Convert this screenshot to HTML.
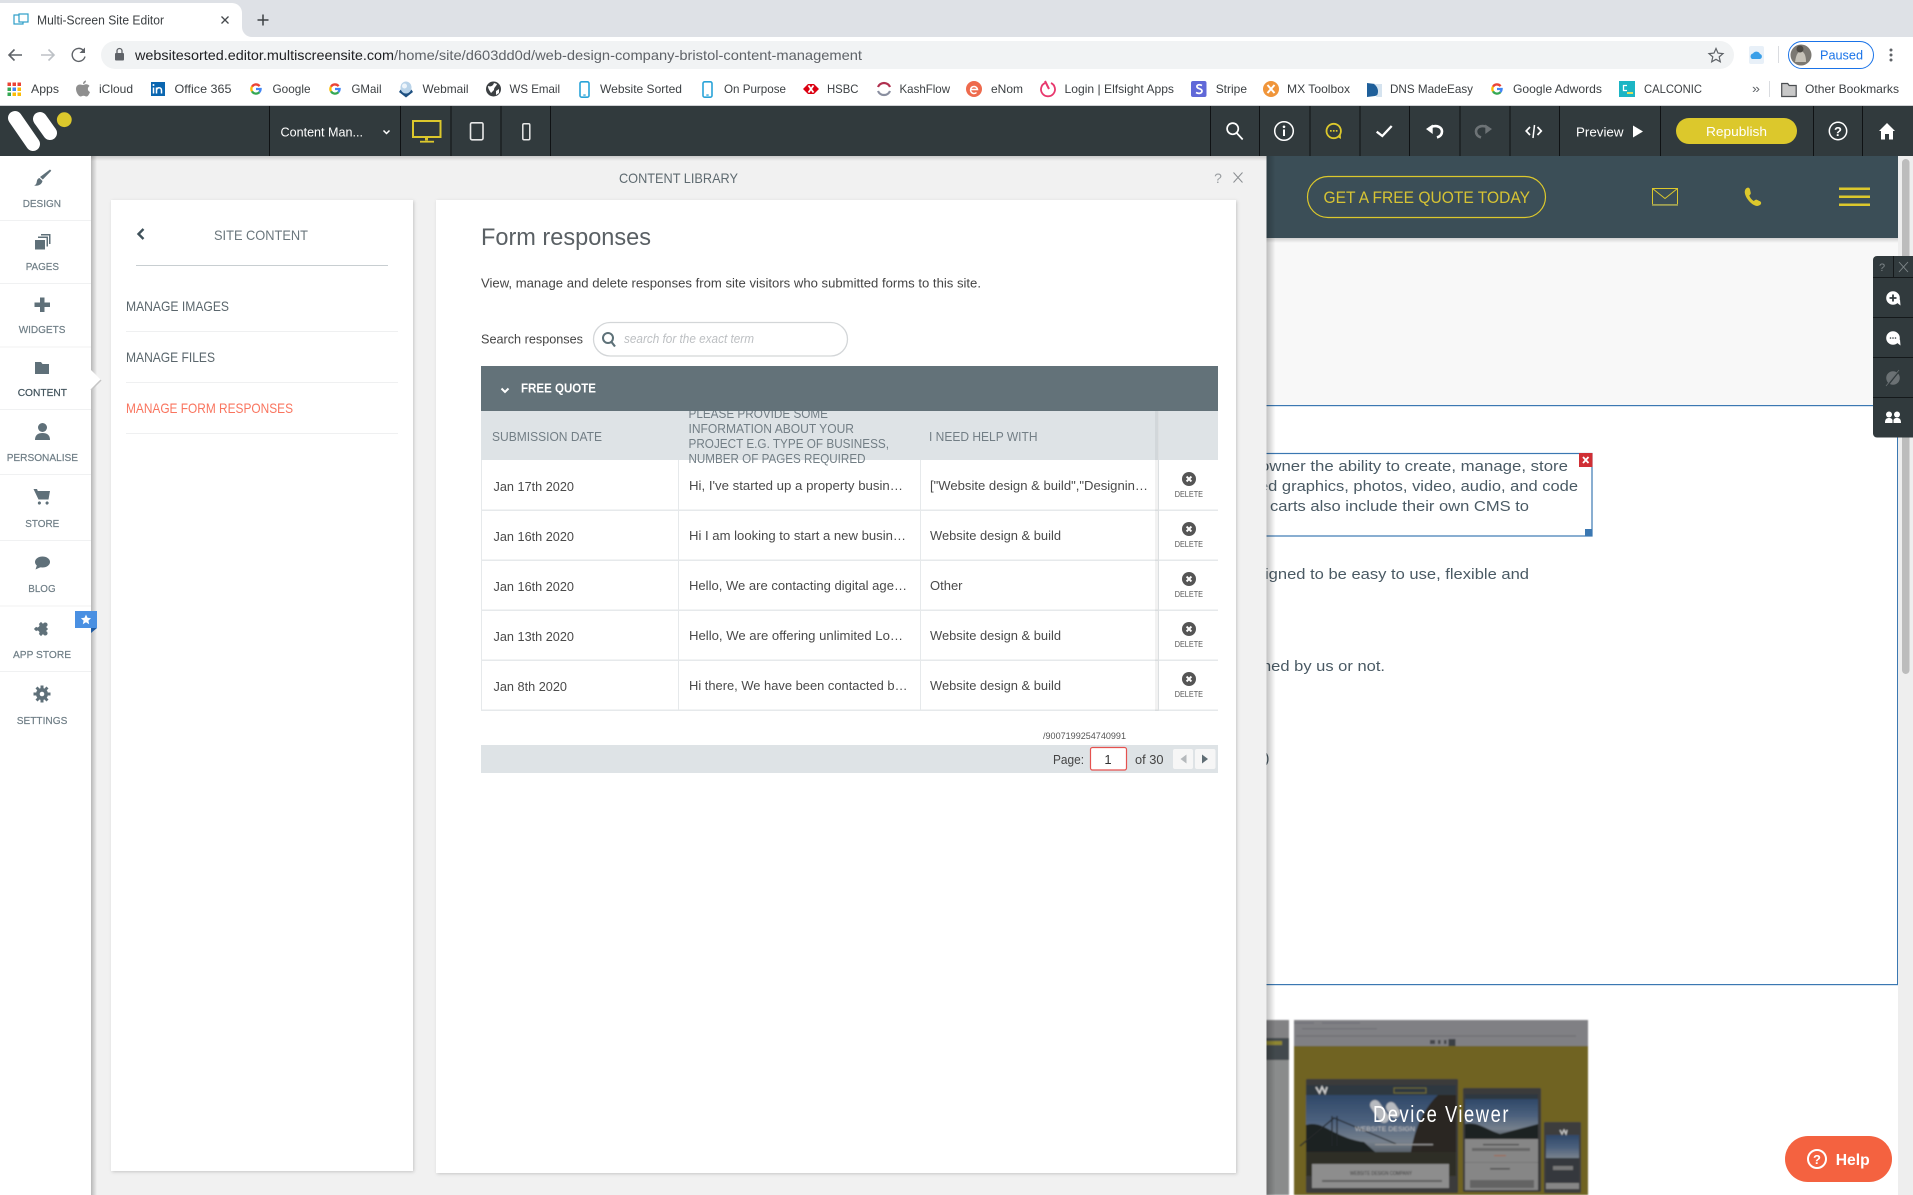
<!DOCTYPE html>
<html><head><meta charset="utf-8"><title>Multi-Screen Site Editor</title>
<style>
html,body{margin:0;padding:0;width:1913px;height:1195px;overflow:hidden;background:#fff}
svg{display:block;position:absolute;left:0;top:0}
text{font-family:"Liberation Sans",sans-serif;white-space:pre}
.bm{font-size:12px;fill:#3c4043}
.side{font-size:10.5px;fill:#6f7e86;stroke:#6f7e86;stroke-width:.2}
.nav{font-size:14px;fill:#5a666c}
.hd{font-size:13px;fill:#727e85}
.cell{font-size:13px;fill:#4a4a4a}
.del{font-size:8px;fill:#555;text-anchor:start}
.site{font-size:15px;fill:#4a5a64}
.ic{fill:#5f7079}
.wh{fill:none;stroke:#fff;stroke-width:2}
</style></head>
<body>
<svg width="1913" height="1195" viewBox="0 0 1913 1195" xmlns="http://www.w3.org/2000/svg">
<defs>
<filter id="sh" x="-5%" y="-5%" width="110%" height="110%"><feDropShadow dx="1" dy="1" stdDeviation="1.5" flood-color="#000" flood-opacity=".18"/></filter>
<filter id="bl" x="-2%" y="-2%" width="104%" height="104%"><feGaussianBlur stdDeviation=".7"/></filter>
<linearGradient id="gl" x1="0" x2="1" y1="0" y2="0"><stop offset="0" stop-color="#000" stop-opacity=".24"/><stop offset="1" stop-color="#000" stop-opacity="0"/></linearGradient>
<linearGradient id="gt" x1="0" x2="0" y1="0" y2="1"><stop offset="0" stop-color="#000" stop-opacity=".16"/><stop offset="1" stop-color="#000" stop-opacity="0"/></linearGradient>
<linearGradient id="sky" x1="0" x2="0" y1="0" y2="1"><stop offset="0" stop-color="#2f4868"/><stop offset=".4" stop-color="#4a5f7c"/><stop offset=".75" stop-color="#76808c"/><stop offset="1" stop-color="#4a525a"/></linearGradient>
<symbol id="g" viewBox="0 0 12 12" overflow="visible"><g fill="none" stroke-width="2.3"><path d="M2 3.7A4.6 4.6 0 0 1 9.6 3.2" stroke="#ea4335"/><path d="M2 3.7A4.6 4.6 0 0 0 2 8.3" stroke="#fbbc05"/><path d="M2 8.3A4.6 4.6 0 0 0 9.4 9.1" stroke="#34a853"/><path d="M9.4 9.1A4.6 4.6 0 0 0 10.6 6H6" stroke="#4285f4"/></g></symbol>
<symbol id="ph" viewBox="0 0 11 17" overflow="visible"><rect x="1" y=".8" width="9" height="15.4" rx="1.6" fill="#fff" stroke="#29a3d8" stroke-width="1.6"/><rect x="4.3" y="13.4" width="2.4" height="1.3" fill="#29a3d8"/></symbol>
<symbol id="dl" viewBox="0 0 14 14" overflow="visible"><circle cx="7" cy="7" r="7" fill="#555"/><path d="M4.6 4.6L9.4 9.4M9.4 4.6L4.6 9.4" stroke="#fff" stroke-width="2"/></symbol>
</defs>

<!-- browser chrome -->
<rect width="1913" height="37" fill="#dee1e6"/>
<path d="M0 3H232a10 10 0 0 1 10 10V27a10 10 0 0 0 10 10H0Z" fill="#fff"/>
<g fill="none" stroke="#2d9ec7" stroke-width="1.2"><rect x="14" y="15" width="9" height="9"/><rect x="19" y="14" width="9" height="8" fill="#fff"/></g>
<text x="37" y="24.5" font-size="12.5" fill="#3c4043" textLength="127" lengthAdjust="spacingAndGlyphs">Multi-Screen Site Editor</text>
<path d="M221.500 16.500l7 7M228.500 16.500l-7 7" stroke="#45494d" stroke-width="1.300"/>
<path d="M263 14.500v11M257.500 20h11" stroke="#3c4043" stroke-width="1.500"/>
<rect y="37" width="1913" height="69" fill="#fff"/>
<rect x="101" y="41" width="1633" height="28" rx="14" fill="#f1f3f4"/>
<g fill="none" stroke="#5f6368" stroke-width="1.600"><path d="M22 55H9M14.500 49.500L9 55l5.500 5.500"/></g>
<g fill="none" stroke="#bdc1c6" stroke-width="1.600"><path d="M41 55H54M48.500 49.500L54 55l-5.500 5.500"/></g>
<path d="M83.500 50.500a6.500 6.500 0 1 0 1.500 6" fill="none" stroke="#5f6368" stroke-width="1.400"/><path d="M85 47.500v5.500h-5.500z" fill="#5f6368"/>
<rect x="115" y="53" width="9" height="7.500" rx="1" fill="#5f6368"/><path d="M117 53v-2a2.500 2.500 0 0 1 5 0v2" fill="none" stroke="#5f6368" stroke-width="1.300"/>
<text x="135" y="60" font-size="14" fill="#202124" textLength="259" lengthAdjust="spacingAndGlyphs">websitesorted.editor.multiscreensite.com</text>
<text x="394" y="60" font-size="14" fill="#5f6368" textLength="468" lengthAdjust="spacingAndGlyphs">/home/site/d603dd0d/web-design-company-bristol-content-management</text>
<path d="M1716 48.500l2 4.600 5 .5-3.800 3.300 1.100 4.900-4.300-2.500-4.300 2.500 1.100-4.900-3.800-3.300 5-.5z" fill="none" stroke="#5f6368" stroke-width="1.200"/>
<rect x="1749" y="46" width="15" height="18" rx="2" fill="#e8f0f8"/><path d="M1752 59a3 3 0 0 1 1-5.500 4 4 0 0 1 7 .5 2.600 2.600 0 0 1 0 5z" fill="#3a9fe8"/>
<rect x="1778" y="46" width="1" height="17" fill="#dadce0"/>
<rect x="1788.500" y="41.500" width="85" height="27" rx="13.500" fill="#fff" stroke="#1a73e8" stroke-width="1"/>
<circle cx="1801" cy="55" r="10.500" fill="#7b7872"/><path d="M1795 62c1-6 2-10 6-11 4 1 5 6 5 11z" fill="#c6c2b8"/><circle cx="1800" cy="49" r="3.500" fill="#4c4944"/>
<text x="1820" y="59.500" font-size="12.500" fill="#1a73e8" textLength="43" lengthAdjust="spacingAndGlyphs">Paused</text>
<g fill="#5f6368"><circle cx="1891" cy="50" r="1.500"/><circle cx="1891" cy="55" r="1.500"/><circle cx="1891" cy="60" r="1.500"/></g>

<!-- bookmarks -->
<g>
<g><rect x="7.500" y="82.500" width="3.500" height="3.500" fill="#ea4335"/><rect x="12.500" y="82.500" width="3.500" height="3.500" fill="#ea4335"/><rect x="17.500" y="82.500" width="3.500" height="3.500" fill="#ea4335"/><rect x="7.500" y="87.500" width="3.500" height="3.500" fill="#34a853"/><rect x="12.500" y="87.500" width="3.500" height="3.500" fill="#4285f4"/><rect x="17.500" y="87.500" width="3.500" height="3.500" fill="#fbbc05"/><rect x="7.500" y="92.500" width="3.500" height="3.500" fill="#34a853"/><rect x="12.500" y="92.500" width="3.500" height="3.500" fill="#fbbc05"/><rect x="17.500" y="92.500" width="3.500" height="3.500" fill="#fbbc05"/></g>
<text class="bm" x="31" y="93" textLength="28" lengthAdjust="spacingAndGlyphs">Apps</text>
<path d="M83 85c2-.6 3-1 4.500-.5 1 .3 1.700 1 2 1.500-2.500 1.800-2 5 .5 6-.7 2-2 4.500-3.500 4.500-1.200 0-1.600-.7-3-.7s-1.800.7-3 .7C78.500 96.500 76 92 76 89c0-3 2-4.500 4-4.500 1.200 0 2 .5 3 .5zM83 84c0-2 1.300-3.300 3-3.500 0 2-1.300 3.300-3 3.500z" fill="#8f8f8f"/>
<text class="bm" x="99" y="93" textLength="34" lengthAdjust="spacingAndGlyphs">iCloud</text>
<rect x="151" y="82" width="14" height="14" fill="#0a66b0"/><path d="M153.500 87.500v6M156.500 93.500v-6M156.500 90c1-3 5-3 5 .5v3" stroke="#fff" stroke-width="1.500" fill="none"/><circle cx="153.500" cy="85" r="1" fill="#fff"/>
<text class="bm" x="174.500" y="93" textLength="57" lengthAdjust="spacingAndGlyphs">Office 365</text>
<use href="#g" x="250" y="83" width="12" height="12"/>
<text class="bm" x="272.500" y="93" textLength="38" lengthAdjust="spacingAndGlyphs">Google</text>
<use href="#g" x="329" y="83" width="12" height="12"/>
<text class="bm" x="351.500" y="93" textLength="30" lengthAdjust="spacingAndGlyphs">GMail</text>
<path d="M399 92a7.500 7 0 0 1 14 0l-7 5.500z" fill="#1d4f80"/><ellipse cx="406" cy="87.500" rx="5.500" ry="6" fill="#b9d3e9"/><ellipse cx="404.500" cy="86" rx="2.500" ry="2.500" fill="#eef5fb"/>
<text class="bm" x="422.500" y="93" textLength="46" lengthAdjust="spacingAndGlyphs">Webmail</text>
<circle cx="493.500" cy="89" r="7.500" fill="#3c4043"/><path d="M488 86c3 1 5 0 6-3l3 1c-1 3-3 3-3 6l-3 3c-1-2-3-4-3-7zM496 91l3-2v4l-3 2z" fill="#fff"/>
<text class="bm" x="509.500" y="93" textLength="50.500" lengthAdjust="spacingAndGlyphs">WS Email</text>
<use href="#ph" x="579" y="81" width="11" height="17"/>
<text class="bm" x="600" y="93" textLength="82" lengthAdjust="spacingAndGlyphs">Website Sorted</text>
<use href="#ph" x="702" y="81" width="11" height="17"/>
<text class="bm" x="724" y="93" textLength="62" lengthAdjust="spacingAndGlyphs">On Purpose</text>
<path d="M803 89l5-5h6l5 5-5 5h-6z" fill="#db0011"/><path d="M808.500 85.500l5 7M813.500 85.500l-5 7" stroke="#fff" stroke-width="1.800"/>
<text class="bm" x="827" y="93" textLength="31.500" lengthAdjust="spacingAndGlyphs">HSBC</text>
<path d="M878 87a6.500 6.500 0 0 1 12 0" fill="none" stroke="#b0304f" stroke-width="2.200"/><path d="M890 91a6.500 6.500 0 0 1-12 0" fill="none" stroke="#8a8fa0" stroke-width="2.200"/>
<text class="bm" x="899.500" y="93" textLength="50.500" lengthAdjust="spacingAndGlyphs">KashFlow</text>
<circle cx="974" cy="89" r="8" fill="#ee6a4d"/><path d="M970.500 89.500h7a3.500 3.500 0 1 0-1 3" fill="none" stroke="#fff" stroke-width="1.500"/>
<text class="bm" x="991" y="93" textLength="32" lengthAdjust="spacingAndGlyphs">eNom</text>
<path d="M1045 83a7 7 0 1 0 6 0" fill="none" stroke="#e8386d" stroke-width="1.800"/><path d="M1045 81l4 8" stroke="#e8386d" stroke-width="2"/>
<text class="bm" x="1064.500" y="93" textLength="109.500" lengthAdjust="spacingAndGlyphs">Login | Elfsight Apps</text>
<rect x="1191" y="81" width="15.500" height="16" rx="2" fill="#6068d8"/><path d="M1202 85.500c-3-1.500-5.500-.5-5 1.500s5 1.500 5 4-3.500 3-6 1.500" fill="none" stroke="#fff" stroke-width="1.700"/>
<text class="bm" x="1215.700" y="93" textLength="31.300" lengthAdjust="spacingAndGlyphs">Stripe</text>
<circle cx="1271" cy="89" r="8" fill="#f0953a"/><path d="M1267.500 85l7 8M1274.500 85l-7 8" stroke="#fff" stroke-width="2"/>
<text class="bm" x="1287" y="93" textLength="63" lengthAdjust="spacingAndGlyphs">MX Toolbox</text>
<path d="M1367 83l8 1c4 1 6 4 6 6s-2 5-6 6l-8 1z" fill="#1e5f9a"/><path d="M1374 84h8v13h-6c3-4 3-9-2-13z" fill="#d5e3ef"/>
<text class="bm" x="1390" y="93" textLength="83" lengthAdjust="spacingAndGlyphs">DNS MadeEasy</text>
<use href="#g" x="1491" y="83" width="12" height="12"/>
<text class="bm" x="1513" y="93" textLength="89" lengthAdjust="spacingAndGlyphs">Google Adwords</text>
<rect x="1619" y="81" width="16" height="16" fill="#1cb5c4"/><path d="M1627 85.500h-3.500v5h3.500" fill="none" stroke="#fff" stroke-width="1.300"/><rect x="1627" y="92" width="6" height="2" fill="#e2e060"/>
<text class="bm" x="1644" y="93" textLength="58" lengthAdjust="spacingAndGlyphs">CALCONIC</text>
<text x="1752" y="93" font-size="13" fill="#5f6368" textLength="8" lengthAdjust="spacingAndGlyphs">»</text>
<rect x="1769" y="81" width="1" height="16" fill="#dadce0"/>
<path d="M1781.700 83.500h6l1.500 2h7v11h-14.500z" fill="#c8c8c8" stroke="#4a4d50" stroke-width="1.200"/>
<text class="bm" x="1805" y="93" textLength="94" lengthAdjust="spacingAndGlyphs">Other Bookmarks</text>
</g>
<rect y="105" width="1913" height="1" fill="#d0d2d5"/>

<!-- site behind -->
<rect x="1200" y="156" width="713" height="1039" fill="#fff"/>
<rect x="1266" y="238" width="632" height="167" fill="#f8f8f8"/>
<rect x="1200" y="156" width="698" height="82" fill="#3b4e57"/>
<rect x="1266" y="238" width="632" height="5" fill="url(#gt)"/>
<rect x="1307.500" y="176.500" width="238" height="41" rx="20.500" fill="none" stroke="#dcc82c" stroke-width="1.200"/>
<text x="1323.500" y="203" font-size="17" fill="#d6c334" textLength="206.500" lengthAdjust="spacingAndGlyphs">GET A FREE QUOTE TODAY</text>
<g fill="none" stroke="#dcc82c" stroke-width="1"><rect x="1652.500" y="188.500" width="25" height="16.500"/><path d="M1652.500 188.500l12.500 10 12.500-10"/></g><rect x="1652" y="204" width="26" height="1.800" fill="#9d9f55"/>
<path d="M1746 188.500c2-1.500 3.500-1 4 1l.8 3.500c.2 1-1 2-1.500 2.500.8 2.500 2.500 4.300 4.500 5.500.7-.5 2-1.700 3-1.200l3.200 1.500c1.500.8 1.500 2.500.3 3.500-3 2.200-6 1-9-1.500-3.500-3-6-7-6.500-10.500-.2-1.800.3-3.300 1.200-4.300z" fill="#dcc82c"/>
<g fill="#dcc82c"><rect x="1839" y="187.500" width="31" height="2.500"/><rect x="1839" y="195.500" width="31" height="2.500"/><rect x="1839" y="203.500" width="31" height="2.500"/></g>
<rect x="1266" y="405" width="632" height="1.200" fill="#3b78b2"/>
<rect x="1897" y="405" width="1.200" height="579" fill="#3b78b2"/>
<rect x="1266" y="984" width="632" height="1.200" fill="#3b78b2"/>
<g fill="none" stroke="#3b78b2" stroke-width="1.200"><rect x="1240" y="453.500" width="352" height="82.500"/></g>
<rect x="1579" y="453" width="13.500" height="14" fill="#d02f35"/><path d="M1583 457l5.500 6M1588.500 457l-5.500 6" stroke="#fff" stroke-width="1.800"/>
<rect x="1585" y="529" width="7.500" height="7.500" fill="#3b78b2"/>
<text class="site" x="1260" y="471" textLength="308" lengthAdjust="spacingAndGlyphs">owner the ability to create, manage, store</text>
<text class="site" x="1259" y="491" textLength="319" lengthAdjust="spacingAndGlyphs">ed graphics, photos, video, audio, and code</text>
<text class="site" x="1270" y="511" textLength="259" lengthAdjust="spacingAndGlyphs">carts also include their own CMS to</text>
<text class="site" x="1265" y="579" textLength="264" lengthAdjust="spacingAndGlyphs">igned to be easy to use, flexible and</text>
<text class="site" x="1262" y="671" textLength="123" lengthAdjust="spacingAndGlyphs">ned by us or not.</text>
<text class="site" x="1264.500" y="763" textLength="5" lengthAdjust="spacingAndGlyphs">)</text>

<!-- thumbs -->
<g filter="url(#bl)">
<rect x="1260" y="1020" width="29" height="175" fill="#8a8c8c"/>
<rect x="1260" y="1020" width="29" height="18" fill="#828284"/>
<rect x="1260" y="1038" width="29" height="22" fill="#434a4e"/>
<rect x="1266" y="1041" width="16" height="4" fill="#8f8730"/>
<rect x="1294" y="1020" width="294" height="26" fill="#808084"/>
<g fill="#6a6c70"><rect x="1294" y="1022" width="20" height="2" opacity=".5"/><rect x="1322" y="1022" width="38" height="2" opacity=".5"/><rect x="1302" y="1028" width="75" height="1.500" opacity=".6"/><rect x="1296" y="1035" width="280" height="2" opacity=".55"/></g>
<g fill="#45474b"><rect x="1430" y="1040" width="5" height="4"/><rect x="1438" y="1040" width="2.500" height="4"/><rect x="1444" y="1040" width="2.500" height="4"/></g>
<rect x="1448.500" y="1039" width="7" height="7" fill="#3a4044"/>
<rect x="1294" y="1046" width="294" height="149" fill="#6f6420"/>
<!-- laptop -->
<rect x="1306" y="1079" width="152" height="114" rx="1.500" fill="#3a3a3a"/>
<rect x="1306" y="1085" width="150" height="10" fill="#2f393f"/>
<rect x="1306" y="1095" width="150" height="62" fill="url(#sky)"/>
<path d="M1306 1125c6-2 12-1 18 2 12 6 24 13 40 15l20 18h-78z" fill="#1f2420"/>
<path d="M1410 1160c2-25 12-50 28-65l18 0v65z" fill="#2b2620"/>
<path d="M1332 1116v30M1337 1116v30M1300 1146l34-28 62 26" stroke="#23272c" stroke-width="1.200" fill="none"/>
<rect x="1306" y="1152" width="150" height="24" fill="#2f2f28"/>
<rect x="1312" y="1164" width="137" height="24" fill="#8d8d8d"/>
<text x="1350" y="1175" font-size="5" fill="#333" textLength="62" lengthAdjust="spacingAndGlyphs">WEBSITE DESIGN COMPANY</text>
<rect x="1322" y="1180" width="120" height="2" fill="#606060"/>
<path d="M1316 1087l3.500 6 2.500-6 3 6 2-6" stroke="#ccc" stroke-width="1.600" fill="none"/>
<rect x="1394" y="1088" width="32" height="5" fill="none" stroke="#8c8230" stroke-width=".7"/>
<!-- tablet -->
<rect x="1463" y="1088" width="78" height="104" rx="1.500" fill="#3b3b3b"/>
<rect x="1465" y="1094" width="73" height="6" fill="#2f393f"/>
<rect x="1465" y="1099" width="73" height="40" fill="url(#sky)"/>
<path d="M1465 1124c12-3 22 6 35 10l38-10v15h-73z" fill="#1f2420"/>
<rect x="1465" y="1139" width="73" height="51" fill="#868686"/>
<rect x="1483" y="1144" width="36" height="1.200" fill="#444"/><rect x="1472" y="1148" width="58" height="3" fill="#666"/><rect x="1494" y="1155" width="12" height="1.200" fill="#a06a55"/>
<rect x="1465" y="1162" width="73" height=".8" fill="#737373"/>
<rect x="1490" y="1168" width="20" height="1.600" fill="#555"/><rect x="1470" y="1180" width="64" height="8" fill="#636363"/>
<!-- phone -->
<rect x="1544" y="1122" width="37" height="71" rx="1.500" fill="#3c3c3c"/>
<rect x="1546" y="1135" width="33" height="30" fill="url(#sky)"/>
<rect x="1546" y="1158" width="33" height="25" fill="#34383c"/>
<rect x="1546" y="1183" width="33" height="6" fill="#868686"/>
<path d="M1560 1130l2 4 2-4 2 4 1-4" stroke="#ccc" stroke-width="1.200" fill="none"/>
<rect x="1553" y="1166" width="20" height="4" fill="#777"/>
<!-- white logo in hero -->
<path d="M1375 1105l9 13M1391 1107l4 6" stroke="#b8bbc0" stroke-width="10" stroke-linecap="round"/>
<circle cx="1391" cy="1110" r="0" fill="#fff"/>
<text x="1355" y="1131" font-size="6" fill="#c4c4c4" textLength="60" lengthAdjust="spacingAndGlyphs">WEBSITE DESIGN</text>
<rect x="1375" y="1144" width="58" height="1.200" fill="#9a9a9a"/>
</g>
<text x="1373" y="1122" font-size="23.500" fill="#fff" style="letter-spacing:2px" textLength="137" lengthAdjust="spacingAndGlyphs">Device Viewer</text>

<!-- help -->
<rect x="1785" y="1136" width="107" height="46" rx="23" fill="#f46240"/>
<circle cx="1817" cy="1159" r="9" fill="none" stroke="#fff" stroke-width="2"/>
<text x="1817" y="1164" font-size="13" font-weight="bold" fill="#fff" text-anchor="middle">?</text>
<text x="1835.700" y="1165" font-size="16" font-weight="bold" fill="#fff" textLength="34" lengthAdjust="spacingAndGlyphs">Help</text>

<!-- scroll strip -->
<rect x="1898" y="156" width="15" height="1039" fill="#eeeeee"/>
<rect x="1902" y="159" width="7.500" height="515" rx="3.700" fill="#bcbcbc"/>

<!-- floating panel -->
<path d="M1877 256H1913V437.500H1877a4 4 0 0 1-4-4V260a4 4 0 0 1 4-4z" fill="#313a3d"/>
<g fill="#15191b"><rect x="1873" y="277" width="40" height="1"/><rect x="1873" y="317" width="40" height="1"/><rect x="1873" y="357" width="40" height="1"/><rect x="1873" y="397" width="40" height="1"/><rect x="1893" y="256" width="1" height="21"/></g>
<text x="1882" y="271" font-size="11" fill="#7e8689" text-anchor="middle">?</text>
<path d="M1899 262l9 10M1908 262l-9 10" stroke="#7e8689" stroke-width=".9"/>
<g fill="#fff"><circle cx="1893" cy="298" r="6.800"/><path d="M1896 302l4.500 3.500-.5-6z"/><circle cx="1893" cy="338" r="6.800"/><path d="M1896 342l4.500 3.500-.5-6z"/></g>
<path d="M1889.500 298h7M1893 294.500v7" stroke="#313a3d" stroke-width="1.800"/>
<g fill="#313a3d"><circle cx="1890.500" cy="338" r=".8"/><circle cx="1893" cy="338" r=".8"/><circle cx="1895.500" cy="338" r=".8"/></g>
<circle cx="1893" cy="378" r="6.800" fill="#6b7174"/><path d="M1887 386l12-15" stroke="#313a3d" stroke-width="2"/><path d="M1886 386l13-16" stroke="#6b7174" stroke-width=".8"/>
<g fill="#fff"><circle cx="1889" cy="414.500" r="3"/><circle cx="1897" cy="414.500" r="3"/><path d="M1885 423c0-4 1.500-5 4-5s3 1 3.500 2v3zM1893.500 423v-3c.5-1 1-2 3.500-2s4 1 4 5z"/></g>

<!-- content library bg -->
<rect x="91" y="156" width="1175.500" height="1039" fill="#f1f1f1"/>
<rect x="1266.500" y="156" width="9" height="1039" fill="url(#gl)"/>
<rect x="91" y="156" width="1175.500" height="5" fill="url(#gt)"/>
<text x="619" y="183" font-size="14" fill="#5e6a70" textLength="119" lengthAdjust="spacingAndGlyphs">CONTENT LIBRARY</text>
<text x="1218" y="183" font-size="14" fill="#9a9ea1" text-anchor="middle">?</text>
<path d="M1233.500 172.500l9 10M1242.500 172.500l-9 10" stroke="#8a8e91" stroke-width="1"/>

<!-- left panel -->
<rect x="111" y="200" width="302" height="971" fill="#fff" filter="url(#sh)"/>
<path d="M143.500 229l-5 5 5 5" fill="none" stroke="#3f515a" stroke-width="2.400"/>
<text x="214" y="240" font-size="14" fill="#6a767c" textLength="94" lengthAdjust="spacingAndGlyphs">SITE CONTENT</text>
<rect x="136" y="265" width="252" height="1" fill="#c8ced1"/>
<text class="nav" x="126" y="311" textLength="103" lengthAdjust="spacingAndGlyphs">MANAGE IMAGES</text>
<rect x="126" y="331" width="272" height="1" fill="#eff0f1"/>
<text class="nav" x="126" y="362" textLength="89" lengthAdjust="spacingAndGlyphs">MANAGE FILES</text>
<rect x="126" y="382" width="272" height="1" fill="#eff0f1"/>
<text class="nav" x="126" y="413" textLength="167" lengthAdjust="spacingAndGlyphs" style="fill:#f9745e">MANAGE FORM RESPONSES</text>
<rect x="126" y="433" width="272" height="1" fill="#eff0f1"/>

<!-- form panel -->
<rect x="436" y="200" width="800" height="973" fill="#fff" filter="url(#sh)"/>
<text x="481" y="245" font-size="24" fill="#5a6064" textLength="170" lengthAdjust="spacingAndGlyphs">Form responses</text>
<text x="481" y="287.500" font-size="13" fill="#444" textLength="500" lengthAdjust="spacingAndGlyphs">View, manage and delete responses from site visitors who submitted forms to this site.</text>
<text x="481" y="343.500" font-size="13" fill="#444" textLength="102" lengthAdjust="spacingAndGlyphs">Search responses</text>
<rect x="593.500" y="322.500" width="254" height="33.500" rx="16.700" fill="#fff" stroke="#d3d6d8" stroke-width="1.300"/>
<circle cx="608" cy="338" r="5" fill="none" stroke="#5d7178" stroke-width="2"/><path d="M611.500 342l3.500 4.500" stroke="#5d7178" stroke-width="2.200"/>
<text x="624" y="343" font-size="13" font-style="italic" fill="#bcbfc2" textLength="130" lengthAdjust="spacingAndGlyphs">search for the exact term</text>

<!-- table header -->
<rect x="481" y="411" width="737" height="49" fill="#dee3e6"/>
<text class="hd" x="492" y="441" textLength="110" lengthAdjust="spacingAndGlyphs">SUBMISSION DATE</text>
<text class="hd" x="688.500" y="418" textLength="139.500" lengthAdjust="spacingAndGlyphs">PLEASE PROVIDE SOME</text>
<text class="hd" x="688.500" y="433" textLength="165.500" lengthAdjust="spacingAndGlyphs">INFORMATION ABOUT YOUR</text>
<text class="hd" x="688.500" y="448" textLength="200.500" lengthAdjust="spacingAndGlyphs">PROJECT E.G. TYPE OF BUSINESS,</text>
<text class="hd" x="688.500" y="463" textLength="177" lengthAdjust="spacingAndGlyphs">NUMBER OF PAGES REQUIRED</text>
<text class="hd" x="929" y="441" textLength="108.500" lengthAdjust="spacingAndGlyphs">I NEED HELP WITH</text>
<rect x="481" y="366" width="737" height="45" fill="#637279"/>
<path d="M501.500 388.500l3.500 3.500 3.500-3.500" fill="none" stroke="#fff" stroke-width="2"/>
<text x="521" y="392.500" font-size="13" font-weight="bold" fill="#fff" textLength="75" lengthAdjust="spacingAndGlyphs">FREE QUOTE</text>

<!-- rows -->
<g fill="#e6e9eb">
<rect x="481" y="460" width="1" height="251"/><rect x="678" y="460" width="1" height="251"/><rect x="920" y="460" width="1" height="251"/>
<rect x="481" y="509.500" width="737" height="1.500"/><rect x="481" y="559.500" width="737" height="1.500"/><rect x="481" y="609.500" width="737" height="1.500"/><rect x="481" y="659.500" width="737" height="1.500"/><rect x="481" y="709.500" width="737" height="1.500"/>
</g>
<rect x="1158" y="411" width="1" height="300" fill="#dcdfe1"/>
<rect x="1155" y="411" width="3" height="300" fill="#000" opacity=".05"/>

<text class="cell" x="493.500" y="491" textLength="80.500" lengthAdjust="spacingAndGlyphs">Jan 17th 2020</text>
<text class="cell" x="689" y="490" textLength="214" lengthAdjust="spacingAndGlyphs">Hi, I've started up a property busin…</text>
<text class="cell" x="930" y="490" textLength="218" lengthAdjust="spacingAndGlyphs">["Website design &amp; build","Designin…</text>
<use href="#dl" x="1182" y="472" width="14" height="14"/>
<text class="del" x="1174.700" y="497" textLength="28.300" lengthAdjust="spacingAndGlyphs">DELETE</text>

<text class="cell" x="493.500" y="541" textLength="80.500" lengthAdjust="spacingAndGlyphs">Jan 16th 2020</text>
<text class="cell" x="689" y="540" textLength="217" lengthAdjust="spacingAndGlyphs">Hi I am looking to start a new busin…</text>
<text class="cell" x="930" y="540" textLength="131" lengthAdjust="spacingAndGlyphs">Website design &amp; build</text>
<use href="#dl" x="1182" y="522" width="14" height="14"/>
<text class="del" x="1174.700" y="547" textLength="28.300" lengthAdjust="spacingAndGlyphs">DELETE</text>

<text class="cell" x="493.500" y="591" textLength="80.500" lengthAdjust="spacingAndGlyphs">Jan 16th 2020</text>
<text class="cell" x="689" y="590" textLength="218" lengthAdjust="spacingAndGlyphs">Hello, We are contacting digital age…</text>
<text class="cell" x="930" y="590" textLength="32.500" lengthAdjust="spacingAndGlyphs">Other</text>
<use href="#dl" x="1182" y="572" width="14" height="14"/>
<text class="del" x="1174.700" y="597" textLength="28.300" lengthAdjust="spacingAndGlyphs">DELETE</text>

<text class="cell" x="493.500" y="641" textLength="80.500" lengthAdjust="spacingAndGlyphs">Jan 13th 2020</text>
<text class="cell" x="689" y="640" textLength="214" lengthAdjust="spacingAndGlyphs">Hello, We are offering unlimited Lo…</text>
<text class="cell" x="930" y="640" textLength="131" lengthAdjust="spacingAndGlyphs">Website design &amp; build</text>
<use href="#dl" x="1182" y="622" width="14" height="14"/>
<text class="del" x="1174.700" y="647" textLength="28.300" lengthAdjust="spacingAndGlyphs">DELETE</text>

<text class="cell" x="493.500" y="691" textLength="73.500" lengthAdjust="spacingAndGlyphs">Jan 8th 2020</text>
<text class="cell" x="689" y="690" textLength="218.500" lengthAdjust="spacingAndGlyphs">Hi there, We have been contacted b…</text>
<text class="cell" x="930" y="690" textLength="131" lengthAdjust="spacingAndGlyphs">Website design &amp; build</text>
<use href="#dl" x="1182" y="672" width="14" height="14"/>
<text class="del" x="1174.700" y="697" textLength="28.300" lengthAdjust="spacingAndGlyphs">DELETE</text>

<text x="1043" y="739" font-size="9.500" fill="#555" textLength="83" lengthAdjust="spacingAndGlyphs">/9007199254740991</text>
<rect x="481" y="745" width="737" height="28" fill="#dee3e6"/>
<text x="1053" y="764" font-size="13" fill="#444" textLength="31" lengthAdjust="spacingAndGlyphs">Page:</text>
<rect x="1090.500" y="747.500" width="36" height="22.500" rx="2" fill="#fff" stroke="#e5524f" stroke-width="1.200"/>
<text x="1108" y="764" font-size="13" fill="#333" text-anchor="middle">1</text>
<text x="1135" y="764" font-size="13" fill="#444" textLength="28.500" lengthAdjust="spacingAndGlyphs">of 30</text>
<rect x="1173" y="749" width="20" height="20" rx="2" fill="#f6f6f6"/><rect x="1195" y="749" width="20.500" height="20" rx="2" fill="#f6f6f6"/>
<path d="M1186.500 754.500v9l-6-4.500z" fill="#b5b9bc"/><path d="M1202 754.500v9l6-4.500z" fill="#5f6d74"/>

<!-- sidebar -->
<rect x="0" y="156" width="91" height="1039" fill="#fff"/>
<rect x="91" y="156" width="6" height="1039" fill="url(#gl)"/>
<g fill="#f0f1f2"><rect y="220" width="91" height="1"/><rect y="283" width="91" height="1"/><rect y="346.500" width="91" height="1"/><rect y="409" width="91" height="1"/><rect y="474" width="91" height="1"/><rect y="540" width="91" height="1"/><rect y="605.500" width="91" height="1"/><rect y="671" width="91" height="1"/></g>
<path d="M91 370l10 10-10 10z" fill="#fff"/><path d="M91 390l10-10" stroke="#c5c5c5" stroke-width="1.500"/>
<path class="ic" d="M50 169.500l1.300 1.300-8.500 8.700-2.800-2.500zM39.500 178l3 3c-.5 3-4 5.500-8.500 4.500 2-.7 2.500-2 2.800-4 .3-2 1.200-3.300 2.700-3.500z"/>
<g class="ic"><path d="M35 240h10v9.500H35zM38 236.500h10v10h-1.500v-8.500H38zM41 234h9.500v10H49v-8.500h-8z"/></g>
<path class="ic" d="M40 297.500h4.500v5h5.500v4.500h-5.500v5H40v-5h-5.500v-4.500H40z"/>
<path class="ic" d="M35 362h6l1.500 2H49v10H35z"/>
<circle class="ic" cx="42.500" cy="427.500" r="4.500"/><path class="ic" d="M35 440c0-5 3-7 7.500-7s7.500 2 7.500 7z"/>
<path class="ic" d="M33.500 489h3.500l.8 2H50l-1.500 8.500H38.500zM37.800 503a1.600 1.600 0 1 1 0 .1zM45.500 503a1.600 1.600 0 1 1 0 .1z"/>
<ellipse class="ic" cx="42.500" cy="562" rx="7.500" ry="5.500"/><path class="ic" d="M37 565l-1.500 4.500 5.500-2.500z"/>
<g transform="rotate(45 41 629)"><rect class="ic" x="36" y="624" width="10" height="10"/><circle class="ic" cx="41" cy="623" r="2.300"/><circle class="ic" cx="47" cy="629" r="2.300"/><circle cx="36" cy="629" r="1.900" fill="#fff"/><circle cx="41" cy="634" r="1.900" fill="#fff"/></g>
<g class="ic"><circle cx="42" cy="694" r="6"/><path d="M40.500 685.500h3v3h-3zM40.500 699.500h3v3h-3zM33.500 692.500h3v3h-3zM47.500 692.500h3v3h-3zM35.500 688.500l2-2 2 2-2 2zM46.500 686.500l2 2-2 2-2-2zM37.500 701.500l-2-2 2-2 2 2zM48.500 699.500l-2 2-2-2 2-2z"/></g>
<circle cx="42" cy="694" r="2.300" fill="#fff"/>
<text class="side" x="22.700" y="206.800" textLength="38.300" lengthAdjust="spacingAndGlyphs">DESIGN</text>
<text class="side" x="25.700" y="270" textLength="33.300" lengthAdjust="spacingAndGlyphs">PAGES</text>
<text class="side" x="18.700" y="333" textLength="46.700" lengthAdjust="spacingAndGlyphs">WIDGETS</text>
<text class="side" x="17.700" y="396" textLength="49.300" lengthAdjust="spacingAndGlyphs" style="fill:#40525b;stroke:#40525b">CONTENT</text>
<text class="side" x="6.700" y="461" textLength="71.300" lengthAdjust="spacingAndGlyphs">PERSONALISE</text>
<text class="side" x="25.300" y="527" textLength="34" lengthAdjust="spacingAndGlyphs">STORE</text>
<text class="side" x="28.300" y="592" textLength="27.300" lengthAdjust="spacingAndGlyphs">BLOG</text>
<text class="side" x="13" y="658" textLength="58" lengthAdjust="spacingAndGlyphs">APP STORE</text>
<text class="side" x="16.700" y="724" textLength="50.700" lengthAdjust="spacingAndGlyphs">SETTINGS</text>
<rect x="75" y="611" width="22" height="17" fill="#4a90e2"/><path d="M91 628h6l-6 5z" fill="#1f5aa0"/>
<path d="M86 614.500l1.500 3.300 3.600.4-2.700 2.400.8 3.600-3.200-1.900-3.200 1.900.8-3.600-2.700-2.400 3.600-.4z" fill="#fff"/>

<!-- dark toolbar -->
<rect y="106" width="1913" height="50" fill="#313a3d"/>
<g fill="#0f1214"><rect x="269" y="106" width="1" height="50"/><rect x="400" y="106" width="1" height="50"/><rect x="450.500" y="106" width="1" height="50"/><rect x="500.500" y="106" width="1" height="50"/><rect x="550" y="106" width="1" height="50"/><rect x="1210" y="106" width="1" height="50"/><rect x="1259" y="106" width="1" height="50"/><rect x="1309.500" y="106" width="1" height="50"/><rect x="1359.500" y="106" width="1" height="50"/><rect x="1409" y="106" width="1" height="50"/><rect x="1459.500" y="106" width="1" height="50"/><rect x="1509.500" y="106" width="1" height="50"/><rect x="1559" y="106" width="1" height="50"/><rect x="1660" y="106" width="1" height="50"/><rect x="1813" y="106" width="1" height="50"/><rect x="1862" y="106" width="1" height="50"/></g>
<path d="M15 118L33 144M40 119L50 133" stroke="#fff" stroke-width="14" stroke-linecap="round" fill="none"/>
<circle cx="64.300" cy="119.700" r="7.400" fill="#dcc82c"/>
<text x="280.500" y="136.500" font-size="13" fill="#fff" textLength="82.500" lengthAdjust="spacingAndGlyphs">Content Man...</text>
<path d="M383.500 130.500l3 3 3-3" fill="none" stroke="#fff" stroke-width="1.500"/>
<g fill="none" stroke="#dcc82c"><rect x="413" y="121" width="27.500" height="16" stroke-width="2"/><path d="M426.500 137.500v3" stroke-width="3"/><path d="M420 141.700h14" stroke-width="1.800"/></g>
<rect x="470.500" y="122.800" width="12.500" height="17" rx="1.500" fill="none" stroke="#e8e8e8" stroke-width="1.600"/>
<rect x="522.800" y="123.800" width="7" height="16" rx="1.300" fill="none" stroke="#e8e8e8" stroke-width="1.500"/>

<circle cx="1232.700" cy="128.700" r="5.600" class="wh" style="stroke-width:1.700"/><path d="M1236.700 133l6 6.500" class="wh" style="stroke-width:1.700"/>
<circle cx="1284" cy="131" r="9.300" class="wh" style="stroke-width:1.500"/><rect x="1283" y="129.500" width="2" height="6.500" fill="#fff"/><circle cx="1284" cy="126.800" r="1.300" fill="#fff"/>
<circle cx="1333.700" cy="131" r="7.200" fill="none" stroke="#dcc82c" stroke-width="1.800"/><path d="M1337.500 137l3.500 2-.3-4.500z" fill="#dcc82c"/>
<g fill="#dcc82c"><rect x="1330" y="130" width="1.700" height="1.700"/><rect x="1332.900" y="130" width="1.700" height="1.700"/><rect x="1335.800" y="130" width="1.700" height="1.700"/></g>
<path d="M1376.700 131.700l5.600 4.300 9.400-10" class="wh" style="stroke-width:2.300"/>
<path d="M1431.500 126.800C1438 124.500 1442 128 1442 131.500C1442 134.500 1440 136.500 1437 137.500" class="wh" style="stroke-width:2.600"/>
<path d="M1432.700 124.500l-6.700 4.500 6.700 5z" fill="#fff"/>
<g transform="matrix(-1 0 0 1 2918 0)"><path d="M1431.500 126.800C1438 124.500 1442 128 1442 131.500C1442 134.500 1440 136.500 1437 137.500" fill="none" stroke="#6d7376" stroke-width="2.600"/><path d="M1432.700 124.500l-6.700 4.500 6.700 5z" fill="#6d7376"/></g>
<path d="M1530 127l-3.800 4 3.800 4M1537.500 127l3.800 4-3.800 4" class="wh" style="stroke-width:1.700"/><path d="M1534.500 125l-1.500 13" class="wh" style="stroke-width:1.500"/>
<text x="1576" y="136.500" font-size="13" fill="#fff" textLength="47.500" lengthAdjust="spacingAndGlyphs">Preview</text>
<path d="M1633 125.500v12l10-6z" fill="#fff"/>
<rect x="1676" y="118" width="121" height="26" rx="13" fill="#dcc82c"/>
<text x="1706" y="136" font-size="13" fill="#fff" textLength="61" lengthAdjust="spacingAndGlyphs">Republish</text>
<circle cx="1838" cy="131" r="8.700" class="wh" style="stroke-width:1.500"/>
<text x="1838" y="136" font-size="13" font-weight="bold" fill="#fff" text-anchor="middle">?</text>
<path d="M1887 123l8 8h-2v8.500h-4V134h-4v5.500h-4V131h-2z" fill="#fff"/>
</svg>
</body></html>
